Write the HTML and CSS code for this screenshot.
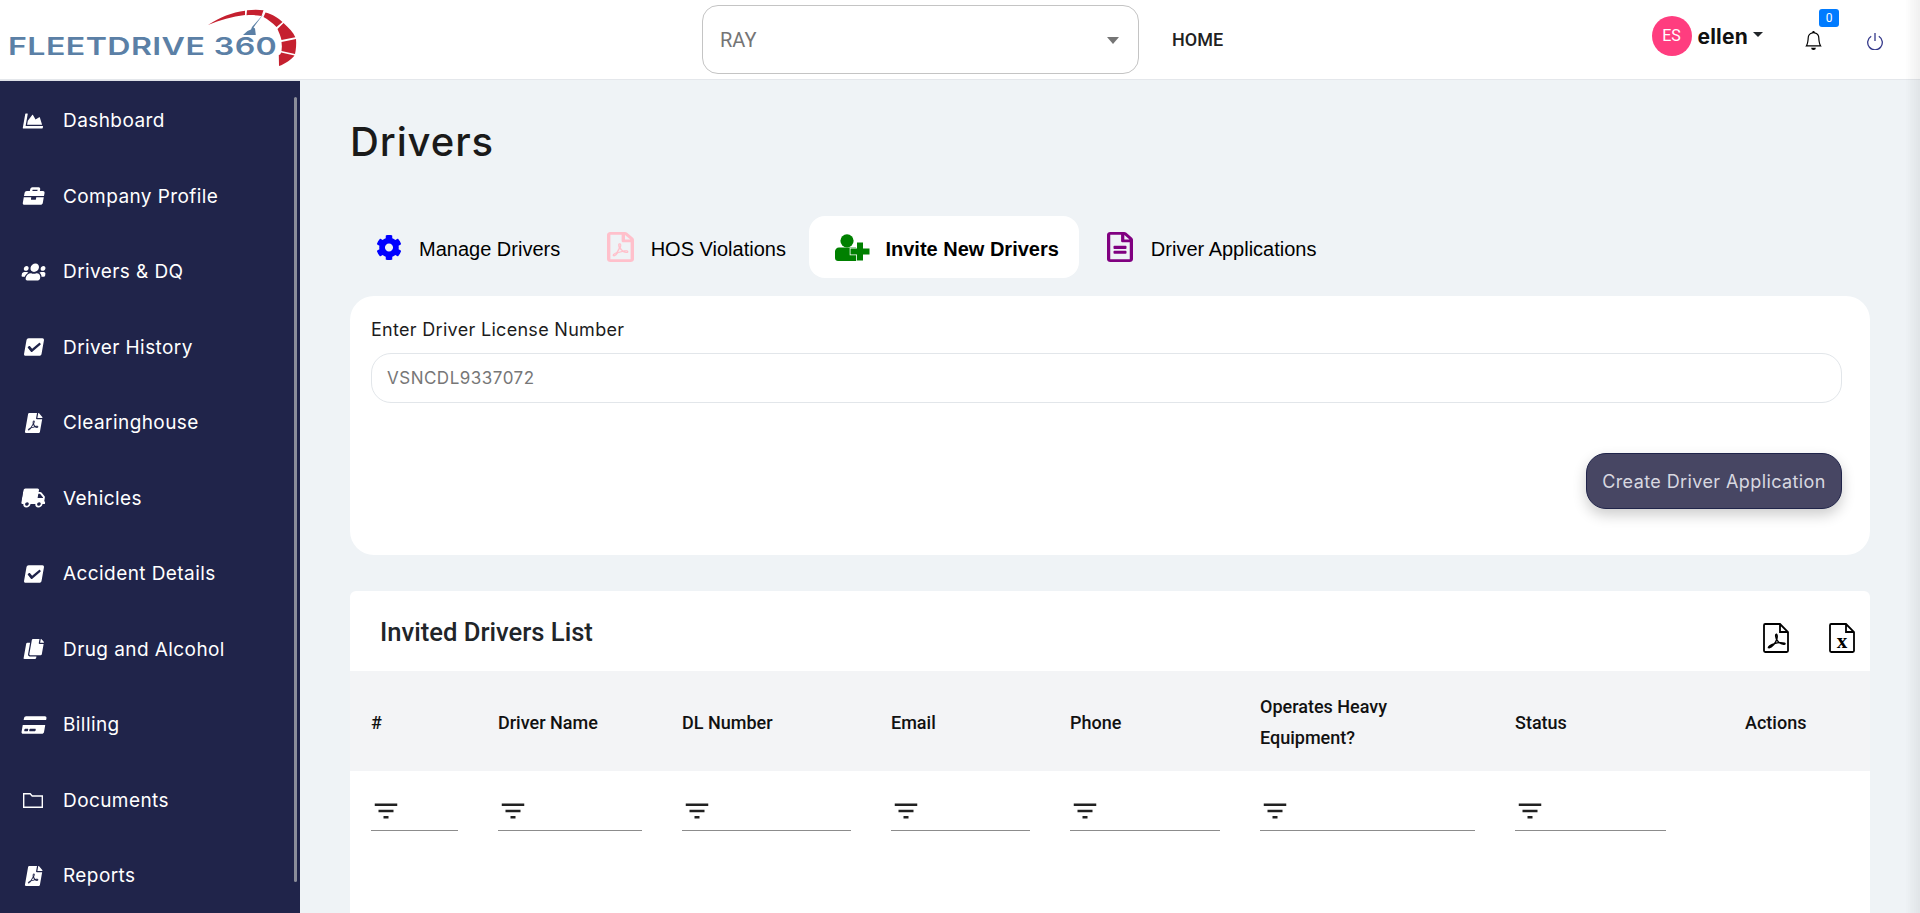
FILE: index.html
```html
<!DOCTYPE html>
<html lang="en">
<head>
<meta charset="utf-8">
<title>Drivers</title>
<link rel="stylesheet" href="styles.css">
</head>
<body>
<svg class="defs" width="0" height="0" aria-hidden="true">
  <symbol id="i-check" viewBox="0 0 448 512"><path d="M400 480H48c-26.51 0-48-21.49-48-48V80c0-26.51 21.49-48 48-48h352c26.51 0 48 21.49 48 48v352c0 26.51-21.49 48-48 48zm-204.686-98.059l184-184c6.248-6.248 6.248-16.379 0-22.627l-22.627-22.627c-6.248-6.248-16.379-6.249-22.628 0L184 302.745l-70.059-70.059c-6.248-6.248-16.379-6.248-22.628 0l-22.627 22.627c-6.248 6.248-6.248 16.379 0 22.627l104 104c6.249 6.25 16.379 6.25 22.628 0z"/></symbol>
  <symbol id="i-pdf" viewBox="0 0 384 512"><path d="M181.9 256.1c-5-16-4.9-46.9-2-46.9 8.4 0 7.6 36.9 2 46.9zm-1.7 47.2c-7.7 20.2-17.3 43.3-28.4 62.7 18.3-7 39-17.2 62.9-21.9-12.7-9.6-24.9-23.4-34.5-40.8zM86.1 428.1c0 .8 13.2-5.4 34.9-40.2-6.7 6.3-29.1 24.5-34.9 40.2zM248 160h136v328c0 13.3-10.7 24-24 24H24c-13.3 0-24-10.7-24-24V24C0 10.7 10.7 0 24 0h200v136c0 13.2 10.8 24 24 24zm-8 171.8c-20-12.2-33.3-29-42.7-53.8 4.5-18.5 11.6-46.6 6.2-64.2-4.7-29.4-42.4-26.5-47.8-6.8-5 18.3-.4 44.1 8.1 77-11.6 27.6-28.7 64.6-40.8 85.8-.1 0-.1.1-.2.1-27.1 13.9-73.6 44.5-54.5 68 5.6 6.9 16 10 21.5 10 17.9 0 35.7-18 61.1-61.8 25.8-8.5 54.1-19.1 79-23.2 21.7 11.8 47.1 19.5 64 19.5 29.2 0 31.2-32 19.7-43.4-13.9-13.6-54.3-9.7-73.6-7.2zM377 105L279 7c-4.5-4.5-10.6-7-17-7h-6v128h128v-6.1c0-6.3-2.5-12.4-7-16.9zm-74.1 255.3c4.1-2.7-2.5-11.9-42.8-9 37.1 15.8 42.8 9 42.8 9z"/></symbol>
  <symbol id="i-filter" viewBox="0 0 24 24"><path d="M10 18h4v-2h-4v2zM3 6v2h18V6H3zm3 7h12v-2H6v2z"/></symbol>
</svg>

<header class="topbar">
  <a class="logo" href="#">
    <span class="logo-text">FLEETDRIVE 360</span>
    <svg class="logo-gauge" viewBox="0 0 104 70" width="104" height="70" aria-hidden="true">
      <path class="red" d="M8 21C20 13 32 8.500 45 6.700L45 11C32 12.500 20 16 8 21z"/>
      <path class="red" d="M47 6.300C53 5.500 59 5.500 63.500 6.300L61.500 12C57 11.200 52 10.900 46.500 11.200z"/>
      <path class="red" d="M65.500 8.500C73 10.500 78 14 82.500 18L76.500 23C72.500 19 68 15.500 63.500 13z"/>
      <path class="red" d="M83.500 19C89 24 93.500 28.500 95.300 33.300L81.500 36C80.500 32 79 28.500 77.500 25z"/>
      <path class="red" d="M96 35C96.500 40 96 45.500 95 50L81.500 47C82 44 82 41 81.500 38z"/>
      <path class="red" d="M94.500 51.500C91.500 55.500 85 60 79 62L78.800 51C80 50.800 80.800 49.800 81 48.500z"/>
      <path class="needle" d="M63.500 10L53.500 23.500l1.500 1 .8 6.500H43l4.500-4 3.500-1.500 1-2.500z"/>
    </svg>
  </a>
  <div class="top-center">
    <div class="company-select">
      <span>RAY</span>
      <span class="select-caret"></span>
    </div>
    <a class="home-link" href="#">HOME</a>
  </div>
  <div class="top-right">
    <span class="avatar">ES</span>
    <span class="user-name">ellen</span>
    <span class="user-caret"></span>
    <span class="bell">
      <svg viewBox="0 0 16 16" width="19" height="19" aria-hidden="true"><path d="M8 16a2 2 0 0 0 2-2H6a2 2 0 0 0 2 2zM8 1.918l-.797.161A4.002 4.002 0 0 0 4 6c0 .628-.134 2.197-.459 3.742-.16.767-.376 1.566-.663 2.258h10.244c-.287-.692-.502-1.49-.663-2.258C12.134 8.197 12 6.628 12 6a4.002 4.002 0 0 0-3.203-3.92L8 1.917zM14.220 12c.223.447.481.801.78 1H1c.299-.199.557-.553.78-1C2.680 10.200 3 6.880 3 6c0-2.420 1.720-4.440 4.005-4.901a1 1 0 1 1 1.990 0A5.002 5.002 0 0 1 13 6c0 .880.320 4.200 1.220 6z"/></svg>
      <span class="badge">0</span>
    </span>
    <svg class="power" viewBox="0 0 18 18" width="18" height="18" aria-hidden="true"><path d="M9 1v8M5.200 4.300a7.300 7.300 0 1 0 7.600 0"/></svg>
  </div>
</header>

<div class="shell">
  <nav class="sidebar">
    <a class="nav-item"><svg class="nav-icon" viewBox="0 0 512 512"><path d="M500 384c6.600 0 12 5.400 12 12v40c0 6.600-5.400 12-12 12H12c-6.600 0-12-5.400-12-12V76c0-6.600 5.400-12 12-12h40c6.600 0 12 5.400 12 12v308h436zM372.700 159.500L288 216l-85.300-113.700c-5.100-6.800-15.500-6.300-19.900 1L96 248v104h384l-89.900-187.800c-3.200-6.500-11.400-8.700-17.400-4.700z"/></svg><span>Dashboard</span></a>
    <a class="nav-item"><svg class="nav-icon" viewBox="0 0 512 512"><path d="M320 336c0 8.840-7.160 16-16 16h-96c-8.840 0-16-7.160-16-16v-48H0v144c0 25.600 22.400 48 48 48h416c25.600 0 48-22.400 48-48V288H320v48zm144-208h-80V80c0-25.600-22.400-48-48-48H176c-25.600 0-48 22.400-48 48v48H48c-25.600 0-48 22.400-48 48v80h512v-80c0-25.600-22.400-48-48-48zm-144 0H192V96h128v32z"/></svg><span>Company Profile</span></a>
    <a class="nav-item"><svg class="nav-icon" viewBox="0 0 640 512"><path d="M96 224c35.300 0 64-28.700 64-64s-28.700-64-64-64-64 28.700-64 64 28.700 64 64 64zm448 0c35.300 0 64-28.700 64-64s-28.700-64-64-64-64 28.700-64 64 28.700 64 64 64zm32 32h-64c-17.600 0-33.500 7.100-45.100 18.600 40.300 22.100 68.900 62 75.100 109.400h66c17.700 0 32-14.300 32-32v-32c0-35.300-28.700-64-64-64zm-256 0c61.900 0 112-50.100 112-112S381.900 32 320 32 208 82.100 208 144s50.100 112 112 112zm76.800 32h-8.300c-20.800 10-43.900 16-68.500 16s-47.600-6-68.500-16h-8.300C179.600 288 128 339.600 128 403.200V432c0 26.500 21.500 48 48 48h288c26.500 0 48-21.500 48-48v-28.800c0-63.600-51.600-115.200-115.200-115.200zm-223.700-13.400C161.500 263.100 145.600 256 128 256H64c-35.300 0-64 28.700-64 64v32c0 17.700 14.300 32 32 32h65.900c6.300-47.400 34.900-87.300 75.200-109.400z"/></svg><span>Drivers &amp; DQ</span></a>
    <a class="nav-item"><svg class="nav-icon"><use href="#i-check"/></svg><span>Driver History</span></a>
    <a class="nav-item"><svg class="nav-icon"><use href="#i-pdf"/></svg><span>Clearinghouse</span></a>
    <a class="nav-item"><svg class="nav-icon" viewBox="0 0 640 512"><path d="M624 352h-16V243.900c0-12.700-5.100-24.900-14.100-33.900L494 110.100c-9-9-21.200-14.100-33.900-14.100H416V48c0-26.500-21.500-48-48-48H48C21.500 0 0 21.500 0 48v320c0 26.500 21.500 48 48 48h16c0 53 43 96 96 96s96-43 96-96h128c0 53 43 96 96 96s96-43 96-96h48c8.800 0 16-7.200 16-16v-32c0-8.800-7.200-16-16-16zM160 464c-26.500 0-48-21.500-48-48s21.500-48 48-48 48 21.500 48 48-21.500 48-48 48zm320 0c-26.500 0-48-21.500-48-48s21.500-48 48-48 48 21.500 48 48-21.500 48-48 48zm80-208H416V144h44.100l99.900 99.900V256z"/></svg><span>Vehicles</span></a>
    <a class="nav-item"><svg class="nav-icon"><use href="#i-check"/></svg><span>Accident Details</span></a>
    <a class="nav-item"><svg class="nav-icon" viewBox="0 0 448 512"><path d="M320 448v40c0 13.255-10.745 24-24 24H24c-13.255 0-24-10.745-24-24V120c0-13.255 10.745-24 24-24h72v296c0 30.879 25.121 56 56 56h168zm0-344V0H152c-13.255 0-24 10.745-24 24v368c0 13.255 10.745 24 24 24h272c13.255 0 24-10.745 24-24V128H344c-13.200 0-24-10.800-24-24zm120.971-31.029L375.029 7.029A24 24 0 0 0 358.059 0H352v96h96v-6.059a24 24 0 0 0-7.029-16.970z"/></svg><span>Drug and Alcohol</span></a>
    <a class="nav-item"><svg class="nav-icon" viewBox="0 0 576 512"><path d="M0 432c0 26.500 21.500 48 48 48h480c26.500 0 48-21.500 48-48V256H0v176zm192-68c0-6.600 5.400-12 12-12h136c6.600 0 12 5.400 12 12v40c0 6.600-5.400 12-12 12H204c-6.600 0-12-5.400-12-12v-40zm-128 0c0-6.600 5.400-12 12-12h72c6.600 0 12 5.400 12 12v40c0 6.600-5.400 12-12 12H76c-6.600 0-12-5.400-12-12v-40zM576 80v48H0V80c0-26.500 21.500-48 48-48h480c26.500 0 48 21.500 48 48z"/></svg><span>Billing</span></a>
    <a class="nav-item"><svg class="nav-icon folder" viewBox="0 0 20 15"><path d="M.7.700h6.500l2 2.300h10.100v11.300H.7z"/></svg><span>Documents</span></a>
    <a class="nav-item"><svg class="nav-icon"><use href="#i-pdf"/></svg><span>Reports</span></a>
    <span class="side-scroll"></span>
  </nav>

  <main class="content">
    <h1 class="page-title">Drivers</h1>
    <div class="tabs">
      <a class="tab"><svg class="tab-icon gear" viewBox="0 0 512 512"><path d="M487.400 315.700l-42.600-24.600c4.300-23.200 4.300-47 0-70.200l42.600-24.600c4.900-2.800 7.100-8.600 5.500-14-11.100-35.600-30-67.800-54.700-94.600-3.800-4.100-10-5.100-14.800-2.300L380.800 110c-17.900-15.400-38.500-27.300-60.800-35.100V25.800c0-5.600-3.900-10.500-9.400-11.700-36.700-8.200-74.300-7.800-109.200 0-5.500 1.200-9.400 6.100-9.400 11.700V75c-22.200 7.900-42.800 19.800-60.800 35.100L88.700 85.500c-4.900-2.800-11-1.900-14.800 2.300-24.700 26.700-43.600 58.900-54.700 94.600-1.700 5.400.6 11.200 5.500 14L67.300 221c-4.300 23.200-4.300 47 0 70.200l-42.600 24.600c-4.900 2.800-7.100 8.600-5.500 14 11.100 35.600 30 67.800 54.700 94.600 3.800 4.100 10 5.100 14.800 2.300l42.600-24.600c17.900 15.400 38.500 27.300 60.800 35.100v49.200c0 5.600 3.900 10.500 9.400 11.700 36.700 8.200 74.300 7.800 109.200 0 5.500-1.200 9.400-6.100 9.400-11.700v-49.200c22.200-7.900 42.800-19.800 60.800-35.100l42.600 24.600c4.900 2.800 11 1.900 14.800-2.300 24.700-26.700 43.600-58.900 54.700-94.600 1.500-5.500-.7-11.300-5.600-14.100zM256 336c-44.100 0-80-35.900-80-80s35.900-80 80-80 80 35.900 80 80-35.900 80-80 80z"/></svg><span>Manage Drivers</span></a>
      <a class="tab"><svg class="tab-icon pink" viewBox="0 0 384 512" preserveAspectRatio="none"><path d="M369.900 97.900L286 14C277 5 264.800-.1 252.100-.1H48C21.500 0 0 21.500 0 48v416c0 26.500 21.500 48 48 48h288c26.500 0 48-21.500 48-48V131.900c0-12.700-5.100-25-14.100-34zM332.100 128H256V51.900l76.100 76.100zM48 464V48h160v104c0 13.300 10.700 24 24 24h104v288H48zm250.200-143.700c-12.200-12-47-8.700-64.400-6.500-17.200-10.500-28.700-25-36.800-46.300 3.900-16.100 10.100-40.600 5.400-56-4.200-26.200-37.800-23.600-42.600-5.900-4.400 16.100-.4 38.500 7 67.100-10 23.900-24.900 56-35.400 74.400-20 10.300-47 26.200-51 46.200-3.300 15.800 26 55.200 76.100-31.200 22.400-7.400 46.800-16.500 68.400-20.100 18.900 10.200 41 17 55.800 17 25.500 0 28-28.200 17.500-38.700zm-198.100 77.800c5.100-13.700 24.500-29.500 30.400-35-19 30.300-30.400 35.700-30.400 35zm81.600-190.600c7.400 0 6.700 32.100 1.800 40.800-4.400-13.900-4.300-40.800-1.800-40.800zm-24.400 136.600c9.700-16.900 18-37 24.700-54.700 8.300 15.100 18.900 27.200 30.100 35.500-20.800 4.300-38.900 13.100-54.800 19.200zm131.600-5s-5 6-37.300-7.800c35.100-2.600 40.900 5.400 37.300 7.800z"/></svg><span>HOS Violations</span></a>
      <a class="tab active"><svg class="tab-icon userplus" viewBox="0 0 35 27"><circle class="up-fill" cx="12" cy="6.800" r="6.600"/><path class="up-fill" d="M4 13.500h16c3.300 0 5.500 2.500 5.500 5.500v8H3c-1.700 0-3-1.300-3-3v-6.500c0-2.300 1.700-4 4-4z"/><path class="up-plus" d="M22 8.500h6v6h6.500v6H28v6h-6v-6h-6.500v-6H22z"/></svg><span>Invite New Drivers</span></a>
      <a class="tab"><svg class="tab-icon purple" viewBox="0 0 384 512" preserveAspectRatio="none"><path d="M288 248v28c0 6.600-5.400 12-12 12H108c-6.600 0-12-5.400-12-12v-28c0-6.600 5.400-12 12-12h168c6.600 0 12 5.400 12 12zm-12 72H108c-6.600 0-12 5.400-12 12v28c0 6.600 5.400 12 12 12h168c6.600 0 12-5.400 12-12v-28c0-6.600-5.400-12-12-12zm108-188.100V464c0 26.500-21.500 48-48 48H48c-26.500 0-48-21.500-48-48V48C0 21.500 21.500 0 48 0h204.100C264.800 0 277 5.100 286 14.100L369.900 98c9 8.900 14.100 21.200 14.100 33.900zm-128-80V128h76.100L256 51.900zM336 464V176H232c-13.300 0-24-10.700-24-24V48H48v416h288z"/></svg><span>Driver Applications</span></a>
    </div>

    <section class="invite-card">
      <label class="field-label">Enter Driver License Number</label>
      <div class="field-input">VSNCDL9337072</div>
      <div class="actions"><button class="primary-btn">Create Driver Application</button></div>
    </section>

    <section class="table-card">
      <div class="table-title-row">
        <h2>Invited Drivers List</h2>
        <div class="exports">
          <svg class="export-icon" viewBox="0 0 26 30"><path class="stroke" d="M1 2.200C1 1.500 1.500 1 2.200 1H17l8 8v18.800c0 .7-.5 1.200-1.200 1.200H2.200C1.500 29 1 28.500 1 27.800zM17 1v8h8"/><path class="squiggle" d="M13 11c-1 2.500.2 5.500 2.500 8 2 1.700 4.500 2.500 6 2.200M13 11c1.500.3 1.500 3 .7 5.500-1.200 3.500-3.500 7-8.200 8.500M5.500 25c-.7-1.200 2-3 6-4.300 3-1 7-1.500 10-.5.800.3.800 1 0 1"/></svg>
          <svg class="export-icon" viewBox="0 0 26 30"><path class="stroke" d="M1 2.200C1 1.500 1.500 1 2.200 1H17l8 8v18.800c0 .7-.5 1.200-1.200 1.200H2.200C1.500 29 1 28.500 1 27.800zM17 1v8h8"/><text class="x-mark" x="13" y="25" text-anchor="middle">x</text></svg>
        </div>
      </div>
      <div class="grid-row head-row">
        <div>#</div><div>Driver Name</div><div>DL Number</div><div>Email</div><div>Phone</div><div>Operates Heavy<br>Equipment?</div><div>Status</div><div>Actions</div>
      </div>
      <div class="grid-row filter-row">
        <div class="filter"><svg viewBox="0 0 24 24"><use href="#i-filter"/></svg></div>
        <div class="filter"><svg viewBox="0 0 24 24"><use href="#i-filter"/></svg></div>
        <div class="filter"><svg viewBox="0 0 24 24"><use href="#i-filter"/></svg></div>
        <div class="filter"><svg viewBox="0 0 24 24"><use href="#i-filter"/></svg></div>
        <div class="filter"><svg viewBox="0 0 24 24"><use href="#i-filter"/></svg></div>
        <div class="filter"><svg viewBox="0 0 24 24"><use href="#i-filter"/></svg></div>
        <div class="filter"><svg viewBox="0 0 24 24"><use href="#i-filter"/></svg></div>
      </div>
    </section>
  </main>
</div>
<div class="edge-shade"></div>
</body>
</html>
```
FILE: styles.css
```css
* { box-sizing: border-box; }
html, body { margin: 0; height: 100%; overflow: hidden; }
body { font-family: Inter, "Liberation Sans", sans-serif; background: #eff3f6; color: #212529; display: flex; flex-direction: column; }
a { text-decoration: none; color: inherit; }
.defs { position: absolute; }

.topbar { height: 80px; flex: none; background: #fff; border-bottom: 1px solid #e4e7eb; display: flex; align-items: center; position: relative; }
.logo { position: relative; width: 300px; height: 79px; flex: none; display: block; }
.logo-text { position: absolute; left: 8px; top: 33px; font: 600 24px/28px Inter, sans-serif; letter-spacing: .3px; color: #5b80a6; white-space: nowrap; transform: scaleX(1.34); transform-origin: left center; }
.logo-gauge { position: absolute; left: 200px; top: 4px; }
.red { fill: #c5202f; }
.needle { fill: #5b80a6; }

.top-center { display: flex; align-items: center; margin-left: 402px; margin-top: -1px; }
.company-select { width: 437px; height: 69px; border: 1px solid #c4c4c4; border-radius: 16px; display: flex; align-items: center; justify-content: space-between; padding: 2px 19px 0 17px; font: 400 20px Roboto, sans-serif; color: #757575; }
.select-caret { width: 0; height: 0; border-left: 6.5px solid transparent; border-right: 6.5px solid transparent; border-top: 7px solid #757575; }
.home-link { margin-left: 33px; font: 500 18px Roboto, sans-serif; color: #212121; }

.top-right { margin-left: auto; display: flex; align-items: center; padding-right: 36px; margin-top: -8px; }
.avatar { width: 40px; height: 40px; border-radius: 50%; background: #ff3d7f; color: #fff; font: 400 16px/40px Roboto, sans-serif; text-align: center; }
.user-name { margin-left: 6px; padding-top: 2px; font: 700 21px Inter, sans-serif; letter-spacing: .2px; color: #111; }
.user-caret { margin-left: 5px; margin-top: -3px; width: 0; height: 0; border-left: 5px solid transparent; border-right: 5px solid transparent; border-top: 5px solid #212529; }
.bell { margin-left: 41px; margin-top: 10px; position: relative; display: flex; }
.badge { position: absolute; left: 15px; top: -22px; width: 20px; height: 18px; background: #007bff; border-radius: 3px; color: #fff; font: 400 12px/18px Roboto, sans-serif; text-align: center; }
.power { margin-left: 43px; margin-top: 10px; fill: none; stroke: #34388a; stroke-width: 1.3; }

.shell { flex: 1; min-height: 0; display: flex; }
.sidebar { width: 300px; flex: none; background: #20244a; border-top: 1px solid #dfe1e8; position: relative; padding-top: 2px; overflow: hidden; }
.nav-item { height: 75.5px; display: flex; align-items: center; padding-left: 22px; color: #fff; font-size: 19px; letter-spacing: .42px; white-space: nowrap; }
.nav-item span { position: absolute; left: 63px; }
.nav-icon { width: 24px; height: 20px; fill: #fff; transform: skewX(-10deg); }
.nav-icon.folder { width: 20px; height: 15px; margin-left: 1px; fill: none; stroke: #fff; stroke-width: 1.4; transform: none; }
.side-scroll { position: absolute; left: 294px; top: 16px; width: 3px; height: 785px; border-radius: 2px; background: #8a8c99; }

.content { flex: 1; min-width: 0; padding: 0 50px; overflow: hidden; }
.page-title { margin: 38px 0 0; font-size: 40px; line-height: 48px; font-weight: 500; letter-spacing: .9px; color: #1a1a1a; }
.tabs { display: flex; margin-top: 50px; height: 62px; font: 400 20px "Liberation Sans", Arial, sans-serif; color: #000; }
.tab { display: flex; align-items: center; height: 62px; padding: 0 20px 0 26px; border-radius: 16px; }
.tab span { margin-left: 17px; padding-top: 5px; }
.tab:nth-child(2) { padding-left: 26.5px; padding-right: 23.5px; }
.tab:nth-child(4) { padding-left: 28px; }
.tab:nth-child(4) span { margin-left: 18px; }
.tab-icon { height: 30px; width: 27px; flex: none; }
.gear { fill: #0000ff; height: 27px; width: 26px; }
.pink { fill: #ffc0cb; }
.purple { fill: #800080; width: 26px; }
.userplus { width: 35px; height: 27px; }
.up-fill { fill: #008000; }
.up-plus { fill: #008000; stroke: #fff; stroke-width: 1.6; paint-order: stroke; }
.active { background: #fff; font-weight: 700; }
.active span { margin-left: 15px; }

.invite-card { margin-top: 18px; height: 259px; background: #fff; border-radius: 24px; padding: 22px 28px 0 21px; display: flex; flex-direction: column; }
.field-label { font-size: 18px; line-height: 24px; letter-spacing: .3px; color: #1c1c1c; }
.field-input { margin-top: 11px; height: 50px; border: 1px solid #e2e6ea; border-radius: 20px; padding: 0 15px; display: flex; align-items: center; font-size: 17px; letter-spacing: .5px; color: #777; }
.actions { margin-top: 50px; display: flex; justify-content: flex-end; }
.primary-btn { width: 256px; height: 56px; background: #474663; border: 1px solid #20244a; border-radius: 20px; box-shadow: 0 6px 14px rgba(0,0,0,.2); color: #d8d8e0; font: 400 18px Inter, sans-serif; letter-spacing: .4px; padding: 0; }

.table-card { margin-top: 36px; height: 322px; background: #fff; border-radius: 6px 6px 0 0; }
.table-title-row { height: 80px; display: flex; justify-content: space-between; padding: 0 15px 0 30px; position: relative; }
.table-title-row h2 { margin: 24px 0 0; font: 500 25.6px/34px Roboto, sans-serif; color: #212529; }
.exports { display: flex; gap: 40px; padding-top: 32px; }
.export-icon { width: 26px; height: 30px; }
.stroke { fill: none; stroke: #000; stroke-width: 1.8; }
.squiggle { fill: none; stroke: #000; stroke-width: 1.4; }
.x-mark { font: 700 21px "Liberation Serif", serif; fill: #000; }
.grid-row { display: grid; grid-template-columns: 127px 184px 209px 179px 190px 255px 230px 1fr; padding-left: 21px; }
.head-row { height: 100px; background: #f3f4f6; align-items: center; font: 500 18px/31px Roboto, sans-serif; color: #111; padding-top: 2px; }
.filter-row { padding-top: 25px; }
.filter { height: 35px; border-bottom: 1px solid #8c8c8c; }
.filter svg { width: 30px; height: 30px; display: block; fill: #212121; }
.filter-row .filter:nth-child(1) { width: 87px; }
.filter-row .filter:nth-child(2) { width: 144px; }
.filter-row .filter:nth-child(3) { width: 169px; }
.filter-row .filter:nth-child(4) { width: 139px; }
.filter-row .filter:nth-child(5) { width: 150px; }
.filter-row .filter:nth-child(6) { width: 215px; }
.filter-row .filter:nth-child(7) { width: 151px; }

.edge-shade { position: fixed; right: 0; top: 0; bottom: 0; width: 15px; background: linear-gradient(to right, rgba(0,0,0,0), rgba(0,0,0,.06)); pointer-events: none; }
```
